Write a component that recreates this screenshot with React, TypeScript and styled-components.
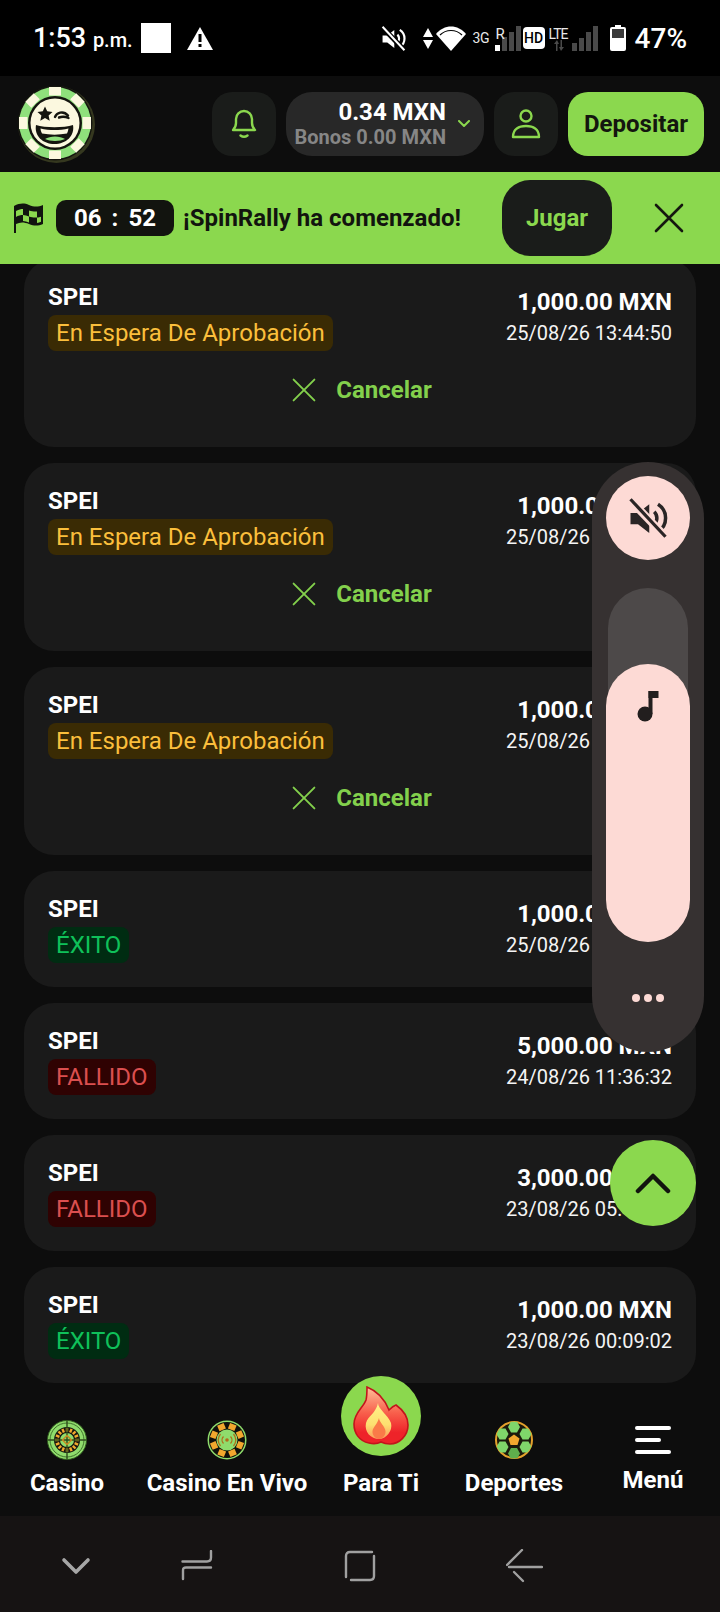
import { createGlobalStyle, styled } from "styled-components";

const GREEN = "#8bd84e";
const PINK = "#fddad5";

const GlobalStyle = createGlobalStyle`
  * {
    box-sizing: border-box;
  }
  html, body {
    margin: 0;
    padding: 0;
    background: #0d0d0d;
  }
  body {
    font-family: Roboto, "Liberation Sans", sans-serif;
  }
`;

type Status = "pending" | "success" | "failed";

const transactions: { amount: string; date: string; status: Status; canCancel?: boolean }[] = [
  { amount: "1,000.00 MXN", date: "25/08/26 13:44:50", status: "pending", canCancel: true },
  { amount: "1,000.00 MXN", date: "25/08/26 13:40:18", status: "pending", canCancel: true },
  { amount: "1,000.00 MXN", date: "25/08/26 13:38:02", status: "pending", canCancel: true },
  { amount: "1,000.00 MXN", date: "25/08/26 12:20:41", status: "success" },
  { amount: "5,000.00 MXN", date: "24/08/26 11:36:32", status: "failed" },
  { amount: "3,000.00 MXN", date: "23/08/26 05:12:27", status: "failed" },
  { amount: "1,000.00 MXN", date: "23/08/26 00:09:02", status: "success" },
];

const statusLabel: Record<Status, string> = {
  pending: "En Espera De Aprobación",
  success: "ÉXITO",
  failed: "FALLIDO",
};

const MuteIcon = ({ size, color, cut }: { size: number; color: string; cut: string }) => (
  <svg width={size} height={size} viewBox="0 0 32 32" fill="none">
    <path d="M2 12h6l9-7v23l-9-7H2z" fill={color} />
    <path d="M21 11a7 7 0 0 1 0 10M24 5a13 13 0 0 1 0 22" stroke={color} strokeWidth="2.8" />
    <path d="M3 3l27 28" stroke={cut} strokeWidth="6.500" />
    <path d="M2 1l28 30" stroke={color} strokeWidth="2.6" />
  </svg>
);

const CloseIcon = ({ size, color, width }: { size: number; color: string; width: number }) => (
  <svg width={size} height={size} viewBox="0 0 30 30" fill="none">
    <path d="M2 2l26 26M28 2L2 28" stroke={color} strokeWidth={width} strokeLinecap="round" />
  </svg>
);

const Logo = () => {
  const stripes = [0, 45, 90, 135, 180, 225, 270, 315];
  return (
    <svg width="80" height="80" viewBox="0 0 80 80">
      <circle cx="40.500" cy="40.500" r="38.500" fill="#35381f" />
      <circle cx="39" cy="39" r="37.500" fill="#14150f" />
      <circle cx="39" cy="39" r="36" fill="#8fe07c" />
      {stripes.map((a) => (
        <rect key={a} x="33" y="3" width="12" height="8.500" fill="#fbf8df" transform={`rotate(${a} 39 39)`} />
      ))}
      <circle cx="39" cy="39" r="27" fill="#14150f" />
      <circle cx="39" cy="39" r="24.500" fill="#fbf8df" />
      <path d="M29 22.500l2.200 4.800 5.300.6-3.900 3.600 1.100 5.200-4.700-2.700-4.700 2.700 1.100-5.200-3.900-3.600 5.300-.6z" fill="#14150f" />
      <path d="M39 33c1.500-4 8-7 13-1.500M43 33.500c3-1 6-1 9.500.5" stroke="#14150f" strokeWidth="2.400" fill="none" strokeLinecap="round" />
      <path d="M20 41c9 3 28 3 37 0 2 11-7 19-18.500 19S18 52 20 41z" fill="#14150f" />
      <path d="M24.500 44.500c9 2 19 2 28 0-.3 2-.8 3.500-1.500 5-8 1.500-17 1.500-25 0-.8-1.500-1.300-3-1.500-5z" fill="#fbf8df" />
      <path d="M29 55c5-3.500 15-3.500 20 0-5 2.500-15 2.500-20 0z" fill="#8fe07c" />
    </svg>
  );
};

const BellIcon = () => (
  <svg width="26" height="30" viewBox="0 0 26 30" fill="none" stroke={GREEN} strokeWidth="2.4" strokeLinecap="round" strokeLinejoin="round">
    <path d="M2 21c2-2 3-3 3-7V10a8 8 0 0 1 16 0v4c0 4 1 5 3 7z" />
    <path d="M9.500 26.500c2 1.500 5 1.500 7 0" />
  </svg>
);

const UserIcon = () => (
  <svg width="30" height="30" viewBox="0 0 30 30" fill="none" stroke={GREEN} strokeWidth="2.4" strokeLinejoin="round">
    <circle cx="15" cy="7" r="5.500" />
    <path d="M2 28c0-8 6-11 13-11s13 3 13 11z" />
  </svg>
);

const FlagIcon = () => (
  <svg width="32" height="32" viewBox="0 0 32 32">
    <path d="M2 31V4c6-3 10-3 15-1s9 2 14 0v19c-5 2-9 2-14 0-5-2-9-2-13 0v9z" fill="#12140f" />
    <path d="M4 9c3-1.500 5-2 7-2v6c-2 0-5 .5-7 2zM17 8.500c3 1 6 1.300 8 1v6c-3 .3-5 0-8-1zM11 13c2 0 4 .5 6 1.500v6c-2-1-4-1.500-6-1.500zM25 15.500c1.500 0 3-.3 4-.7v5c-1.200.7-2.700 1-4 1.200z" fill={GREEN} />
  </svg>
);

const RouletteIcon = () => {
  const ticks = Array.from({ length: 16 }, (_, i) => i * 22.5);
  return (
    <svg width="40" height="40" viewBox="0 0 40 40">
      <circle cx="20" cy="20" r="19.500" fill="#8fdc6c" stroke="#2f5a1e" strokeWidth="1" />
      <circle cx="20" cy="20" r="17" fill="none" stroke="#2f5a1e" strokeWidth=".8" />
      <circle cx="20" cy="20" r="13" fill="#15180f" />
      {ticks.map((a) => (
        <rect key={a} x="18.800" y="8" width="2.400" height="3.800" fill="#f2a82e" transform={`rotate(${a} 20 20)`} />
      ))}
      <circle cx="20" cy="20" r="7" fill="#8fdc6c" />
      <path d="M20 1v38M1 20h38" stroke="#2c4a1a" strokeWidth="1.400" />
      <path d="M20 15.500l4.500 4.500-4.500 4.500-4.500-4.500z" fill="none" stroke="#c98a22" strokeWidth="1.500" />
    </svg>
  );
};

const LiveChipIcon = () => {
  const spots = [0, 45, 90, 135, 180, 225, 270, 315];
  return (
    <svg width="40" height="40" viewBox="0 0 40 40">
      <circle cx="20" cy="20" r="19.500" fill="#8fdc6c" />
      <circle cx="20" cy="20" r="18" fill="#0f100b" />
      {spots.map((a) => (
        <rect key={a} x="16.500" y="3" width="7" height="6" fill="#f2a82e" transform={`rotate(${a + 22} 20 20)`} />
      ))}
      <circle cx="20" cy="20" r="10.500" fill="#8fdc6c" />
      <circle cx="20" cy="20" r="1.800" fill="#b06e1a" />
      <path d="M16.500 16.500a5 5 0 0 0 0 7M23.500 16.500a5 5 0 0 1 0 7M13.500 14a9 9 0 0 0 0 12M26.500 14a9 9 0 0 1 0 12" stroke="#b06e1a" strokeWidth="1.300" fill="none" />
    </svg>
  );
};

const hexCenters = [
  [20, 7],
  [8.500, 14],
  [31.500, 14],
  [8.500, 27],
  [31.500, 27],
  [20, 33.500],
];

const BallIcon = () => (
  <svg width="40" height="40" viewBox="0 0 40 40">
    <defs>
      <clipPath id="ballClip">
        <circle cx="20" cy="20" r="18.500" />
      </clipPath>
    </defs>
    <circle cx="20" cy="20" r="19" fill="#1b1a0c" />
    <circle cx="20" cy="20" r="18" fill="none" stroke="#e3a02c" strokeWidth="2" />
    <g clipPath="url(#ballClip)">
      {hexCenters.map(([x, y]) => (
        <path
          key={`${x}-${y}`}
          d={`M${x - 6} ${y}l3-5.400h6l3 5.400-3 5.400h-6z`}
          fill={y > 30 ? "#5fae4c" : "#7fd66a"}
        />
      ))}
    </g>
    <path d="M20 14.500l5.500 4-2 6.500h-7l-2-6.500z" fill="#f2a82e" />
  </svg>
);

const FlameIcon = () => (
  <svg width="56" height="60" viewBox="0 0 56 60">
    <defs>
      <linearGradient id="flameOuter" x1="0" y1="0" x2="0" y2="1">
        <stop offset="0" stopColor="#ffc09a" />
        <stop offset="0.45" stopColor="#f8604c" />
        <stop offset="0.8" stopColor="#ee2329" />
      </linearGradient>
      <linearGradient id="flameInner" x1="0" y1="0" x2="0" y2="1">
        <stop offset="0" stopColor="#fff28a" />
        <stop offset="0.6" stopColor="#fde070" />
        <stop offset="1" stopColor="#fb9a5a" />
      </linearGradient>
    </defs>
    <path d="M14 1C24 5 32 14 36 24c2-2 4-4 7-5 7 5 12 12 12 20 0 11-9 19-18 19-4 0-7-1-9-2-4 2-8 2-12 1C6 55 1 47 1 38c0-11 9-16 12-24 1-4 1-9 1-13z" fill="url(#flameOuter)" stroke="#c3141c" strokeWidth="1.600" />
    <path d="M25 17c0 6 10 12 13 20 2 8-5 16-12 16-8 0-15-7-13-16 2-7 10-10 12-20z" fill="url(#flameInner)" />
    <path d="M26 32c0 4 6 8 6.500 13 .5 4-3 8-6.500 8s-7-4-6.500-8c.5-4 5-7 6.500-13z" fill="#fa7a48" />
  </svg>
);

const MenuIcon = () => (
  <svg width="36" height="28" viewBox="0 0 36 28" fill="#fff">
    <rect x="0" y="0" width="36" height="4" rx="2" />
    <rect x="0" y="12" width="26" height="4" rx="2" />
    <rect x="0" y="24" width="36" height="4" rx="2" />
  </svg>
);

const App = () => {
  return (
    <Screen>
      <GlobalStyle />
      <StatusBar>
        <StatusLeft>
          <Time>
            1:53 <small>p.m.</small>
          </Time>
          <WhiteSquare />
          <WarnBox>
            <svg width="26" height="23" viewBox="0 0 26 23">
              <path d="M13 0l13 23H0z" fill="#fff" />
              <rect x="11.500" y="7" width="3" height="8" fill="#000" />
              <rect x="11.500" y="17" width="3" height="3" fill="#000" />
            </svg>
          </WarnBox>
        </StatusLeft>
        <StatusRight>
          <MuteIcon size={25} color="#fff" cut="#000" />
          <svg width="10" height="21" viewBox="0 0 10 21" fill="#fff" style={{ marginLeft: 17 }}>
            <path d="M5 0l5 9H0zM5 21L0 12h10z" />
          </svg>
          <svg width="30" height="25" viewBox="0 0 30 25" style={{ marginLeft: 3 }}>
            <path d="M15 25L0 8c8-10 22-10 30 0z" fill="#fff" />
            <path d="M4 9c6-6 16-6 22 0" stroke="#000" strokeWidth="1.200" fill="none" />
          </svg>
          <ThreeG>3G</ThreeG>
          <SignalBox $ml={6} $pl={0}>
            <SignalTag>R</SignalTag>
            <Bar $h={6} $on />
            <Bar $h={14} />
            <Bar $h={19} />
            <Bar $h={25} />
          </SignalBox>
          <HdBadge>HD</HdBadge>
          <SignalBox $ml={4} $pl={23}>
            <LteTag>LTE</LteTag>
            <LteArrows>
              <svg width="12" height="11" viewBox="0 0 12 11" fill="#4a4a4a">
                <path d="M3 11V4H1l3-4 2 4H4.500v7zM9 0v7h2l-3 4-2-4h1.500V0z" />
              </svg>
            </LteArrows>
            <Bar $h={8} />
            <Bar $h={13} />
            <Bar $h={19} />
            <Bar $h={25} />
          </SignalBox>
          <svg width="16" height="26" viewBox="0 0 16 26" fill="#fff" style={{ marginLeft: 12 }}>
            <path d="M5 0h6v2h3a2 2 0 0 1 2 2v20a2 2 0 0 1-2 2H2a2 2 0 0 1-2-2V4a2 2 0 0 1 2-2h3z" />
            <rect x="2" y="4" width="12" height="9" fill="#3a3a3a" />
          </svg>
          <Battery>47%</Battery>
        </StatusRight>
      </StatusBar>

      <Header>
        <LogoBox>
          <Logo />
        </LogoBox>
        <HeaderActions>
          <IconButton>
            <BellIcon />
          </IconButton>
          <BalancePill>
            <BalanceText>
              <BalanceMain>0.34 MXN</BalanceMain>
              <BalanceBonus>Bonos 0.00 MXN</BalanceBonus>
            </BalanceText>
            <svg width="12" height="8" viewBox="0 0 12 8" fill="none" stroke={GREEN} strokeWidth="2" strokeLinecap="round" strokeLinejoin="round">
              <path d="M1 1l5 5 5-5" />
            </svg>
          </BalancePill>
          <IconButton>
            <UserIcon />
          </IconButton>
          <DepositButton>Depositar</DepositButton>
        </HeaderActions>
      </Header>

      <Banner>
        <FlagIcon />
        <Timer>
          <span>06</span>
          <span>:</span>
          <span>52</span>
        </Timer>
        <BannerText>¡SpinRally ha comenzado!</BannerText>
        <PlayButton>Jugar</PlayButton>
        <BannerClose>
          <CloseIcon size={30} color="#15170f" width={2.6} />
        </BannerClose>
      </Banner>

      <List>
        {transactions.map((t, i) => (
          <Card key={i}>
            <CardTop>
              <div>
                <Method>SPEI</Method>
                <Badge $status={t.status}>{statusLabel[t.status]}</Badge>
              </div>
              <Amounts>
                <Amount>{t.amount}</Amount>
                <DateText>{t.date}</DateText>
              </Amounts>
            </CardTop>
            {t.canCancel && (
              <CancelRow>
                <CloseIcon size={24} color="#83d04c" width={2.4} />
                <span>Cancelar</span>
              </CancelRow>
            )}
          </Card>
        ))}
      </List>

      <BottomNav>
        <NavItem>
          <NavIcon>
            <RouletteIcon />
          </NavIcon>
          <NavLabel>Casino</NavLabel>
        </NavItem>
        <NavItem>
          <NavIcon>
            <LiveChipIcon />
          </NavIcon>
          <NavLabel>Casino En Vivo</NavLabel>
        </NavItem>
        <NavItem>
          <HotCircle>
            <FlameIcon />
          </HotCircle>
          <NavLabel>Para Ti</NavLabel>
        </NavItem>
        <NavItem>
          <NavIcon>
            <BallIcon />
          </NavIcon>
          <NavLabel>Deportes</NavLabel>
        </NavItem>
        <NavItem>
          <NavIcon>
            <MenuIcon />
          </NavIcon>
          <NavLabel $raised>Menú</NavLabel>
        </NavItem>
      </BottomNav>

      <SystemNav>
        <svg width="30" height="18" viewBox="0 0 30 18" fill="none" stroke="#a6a6a6" strokeWidth="3.600" strokeLinecap="round" strokeLinejoin="round">
          <path d="M3 3l12 12L27 3" />
        </svg>
        <svg width="32" height="32" viewBox="0 0 32 32" fill="none" stroke="#a0a0a0" strokeWidth="2.400" strokeLinecap="round">
          <path d="M1.500 11.500H26q4 0 4-4V1" />
          <path d="M30 17.500H5q-3 0-3 3V29" />
        </svg>
        <svg width="32" height="32" viewBox="0 0 32 32" fill="none" stroke="#a0a0a0" strokeWidth="2.400" strokeLinecap="round">
          <path d="M2 27V6q0-4 4-4h22" />
          <path d="M30 6v20q0 4-4 4H7" />
        </svg>
        <svg width="37" height="34" viewBox="0 0 37 34" fill="none" stroke="#a0a0a0" strokeWidth="2.400" strokeLinecap="round">
          <path d="M3 18h33" />
          <path d="M1 16L16 1" />
          <path d="M8 23l9 9" />
        </svg>
      </SystemNav>

      <VolumePanel>
        <MuteButton>
          <MuteIcon size={40} color="#2a2525" cut={PINK} />
        </MuteButton>
        <Track>
          <Thumb>
            <svg width="22" height="32" viewBox="0 0 22 32" fill="#221e1e">
              <circle cx="8" cy="24" r="7.500" />
              <rect x="11.500" y="1" width="4" height="23" />
              <rect x="11.500" y="1" width="10" height="7" />
            </svg>
          </Thumb>
        </Track>
        <Dots>
          <Dot />
          <Dot />
          <Dot />
        </Dots>
      </VolumePanel>

      <ScrollTop>
        <svg width="36" height="22" viewBox="0 0 36 22" fill="none" stroke="#12140f" strokeWidth="4.500" strokeLinecap="round" strokeLinejoin="round">
          <path d="M3 19L18 4l15 15" />
        </svg>
      </ScrollTop>
    </Screen>
  );
};

export default App;

const Screen = styled.div`
  position: relative;
  display: flex;
  flex-direction: column;
  width: 720px;
  height: 1612px;
  overflow: hidden;
  background: #0d0d0d;
  color: #fff;
`;

const StatusBar = styled.div`
  display: flex;
  flex: none;
  justify-content: space-between;
  align-items: center;
  height: 76px;
  padding: 0 33px;
  background: #000;
`;

const StatusLeft = styled.div`
  display: flex;
  align-items: center;
  gap: 8px;
`;

const Time = styled.div`
  font-size: 27px;
  font-weight: 500;
  white-space: nowrap;

  small {
    font-size: 20px;
    font-weight: 500;
  }
`;

const WhiteSquare = styled.div`
  width: 30px;
  height: 30px;
  background: #fff;
`;

const WarnBox = styled.div`
  display: flex;
  margin-left: 8px;
`;

const StatusRight = styled.div`
  display: flex;
  align-items: center;
`;

const ThreeG = styled.span`
  width: 16px;
  margin-left: 7px;
  font-size: 14px;
  letter-spacing: -0.5px;
  color: #e8e8e8;
`;

const SignalBox = styled.div<{ $ml: number; $pl: number }>`
  position: relative;
  display: flex;
  align-items: flex-end;
  gap: 2px;
  height: 25px;
  margin-left: ${(p) => p.$ml}px;
  padding-left: ${(p) => p.$pl}px;
`;

const Bar = styled.div<{ $h: number; $on?: boolean }>`
  width: 5px;
  height: ${(p) => p.$h}px;
  background: ${(p) => (p.$on ? "#fff" : "#4a4a4a")};
`;

const SignalTag = styled.span`
  position: absolute;
  left: 1px;
  top: 1px;
  font-size: 15px;
  line-height: 15px;
  color: #e8e8e8;
`;

const LteTag = styled.span`
  position: absolute;
  left: 0;
  top: 1px;
  font-size: 14px;
  line-height: 14px;
  letter-spacing: -1px;
  color: #e8e8e8;
`;

const LteArrows = styled.span`
  position: absolute;
  left: 4px;
  bottom: 0;
  display: flex;
`;

const HdBadge = styled.div`
  display: flex;
  align-items: center;
  justify-content: center;
  width: 22px;
  height: 22px;
  margin-left: 2px;
  border-radius: 4px;
  background: #fff;
  color: #000;
  font-size: 14px;
  font-weight: 500;
`;

const Battery = styled.span`
  margin-left: 9px;
  font-size: 28px;
  font-weight: 500;
`;

const Header = styled.div`
  display: flex;
  flex: none;
  justify-content: space-between;
  align-items: center;
  height: 96px;
  padding: 0 16px;
  background: #0d0d0d;
`;

const LogoBox = styled.div`
  display: flex;
`;

const HeaderActions = styled.div`
  display: flex;
  align-items: center;
  gap: 10px;
`;

const IconButton = styled.div`
  display: flex;
  align-items: center;
  justify-content: center;
  width: 64px;
  height: 64px;
  border-radius: 20px;
  background: #1a1c1a;
`;

const BalancePill = styled.div`
  display: flex;
  align-items: center;
  justify-content: flex-end;
  gap: 12px;
  width: 198px;
  height: 64px;
  padding-right: 14px;
  border-radius: 26px;
  background: #282828;
`;

const BalanceText = styled.div`
  display: flex;
  flex-direction: column;
  align-items: flex-end;
`;

const BalanceMain = styled.div`
  font-size: 24px;
  line-height: 27px;
  font-weight: 700;
`;

const BalanceBonus = styled.div`
  font-size: 20px;
  line-height: 23px;
  font-weight: 700;
  color: #868686;
  white-space: nowrap;
`;

const DepositButton = styled.div`
  display: flex;
  align-items: center;
  justify-content: center;
  width: 136px;
  height: 64px;
  border-radius: 20px;
  background: ${GREEN};
  color: #14160f;
  font-size: 24px;
  font-weight: 700;
`;

const Banner = styled.div`
  position: relative;
  z-index: 1;
  display: flex;
  flex: none;
  align-items: center;
  height: 92px;
  padding: 0 36px 0 12px;
  background: ${GREEN};
`;

const Timer = styled.div`
  display: flex;
  align-items: center;
  justify-content: center;
  gap: 10px;
  width: 118px;
  height: 36px;
  margin-left: 12px;
  border-radius: 10px;
  background: #12140f;
  color: #fff;
  font-size: 24px;
  font-weight: 700;
`;

const BannerText = styled.div`
  flex: 1;
  margin-left: 9px;
  color: #12140f;
  font-size: 24px;
  font-weight: 700;
  white-space: nowrap;
`;

const PlayButton = styled.div`
  display: flex;
  align-items: center;
  justify-content: center;
  width: 110px;
  height: 76px;
  border-radius: 28px;
  background: #1a1c1a;
  color: ${GREEN};
  font-size: 24px;
  font-weight: 700;
`;

const BannerClose = styled.div`
  display: flex;
  margin-left: 42px;
`;

const List = styled.div`
  display: flex;
  flex: 1;
  flex-direction: column;
  gap: 16px;
  min-height: 0;
  margin-top: -5px;
  padding: 0 24px;
  overflow: hidden;
`;

const Card = styled.div`
  flex: none;
  padding: 25px 24px 0;
  border-radius: 30px;
  background: #1a1a1a;
`;

const CardTop = styled.div`
  display: flex;
  justify-content: space-between;
  align-items: flex-start;
  padding-bottom: 24px;
`;

const Method = styled.div`
  font-size: 24px;
  line-height: 26px;
  font-weight: 700;
  margin-bottom: 5px;
`;

const badgeColors: Record<Status, { fg: string; bg: string }> = {
  pending: { fg: "#fbbf3c", bg: "#3a2b04" },
  success: { fg: "#0fc15a", bg: "#002c12" },
  failed: { fg: "#db4f4f", bg: "#2f0202" },
};

const Badge = styled.div<{ $status: Status }>`
  display: inline-block;
  height: 36px;
  padding: 0 8px;
  border-radius: 8px;
  background: ${(p) => badgeColors[p.$status].bg};
  color: ${(p) => badgeColors[p.$status].fg};
  font-size: 24px;
  line-height: 36px;
`;

const Amounts = styled.div`
  display: flex;
  flex-direction: column;
  align-items: flex-end;
  gap: 5px;
  padding-top: 5px;
`;

const Amount = styled.div`
  font-size: 24px;
  line-height: 26px;
  font-weight: 700;
`;

const DateText = styled.div`
  font-size: 20px;
  line-height: 26px;
  color: #f4f4f4;
`;

const CancelRow = styled.div`
  display: flex;
  align-items: center;
  justify-content: center;
  gap: 20px;
  height: 48px;
  margin-top: -9px;
  margin-bottom: 33px;
  padding-left: 4px;
  color: #83d04c;
  font-size: 24px;
  font-weight: 700;
`;

const BottomNav = styled.div`
  position: relative;
  z-index: 1;
  display: grid;
  flex: none;
  grid-template-columns: 134px 186px 122px 144px 134px;
  height: 120px;
  background: #0d0d0d;
`;

const NavItem = styled.div`
  display: flex;
  flex-direction: column;
  align-items: center;
  padding-top: 24px;
`;

const NavIcon = styled.div`
  display: flex;
  align-items: center;
  justify-content: center;
  height: 40px;
  margin-bottom: 9px;
`;

const HotCircle = styled.div`
  display: flex;
  align-items: center;
  justify-content: center;
  width: 80px;
  height: 80px;
  margin-top: -44px;
  margin-bottom: 13px;
  border-radius: 50%;
  background: ${GREEN};
`;

const NavLabel = styled.div<{ $raised?: boolean }>`
  font-size: 24px;
  line-height: 28px;
  font-weight: 700;
  white-space: nowrap;
  margin-top: ${(p) => (p.$raised ? "-3px" : "0")};
`;

const SystemNav = styled.div`
  display: grid;
  flex: none;
  grid-template-columns: 120px 163px 162px 37px;
  align-items: center;
  height: 96px;
  padding: 4px 0 0 61px;
  background: #161313;
`;

const VolumePanel = styled.div`
  position: absolute;
  z-index: 2;
  top: 462px;
  left: 592px;
  display: flex;
  flex-direction: column;
  align-items: center;
  width: 112px;
  height: 590px;
  padding-top: 14px;
  border-radius: 56px;
  background: #363131;
`;

const MuteButton = styled.div`
  display: flex;
  flex: none;
  align-items: center;
  justify-content: center;
  width: 84px;
  height: 84px;
  border-radius: 50%;
  background: ${PINK};
`;

const Track = styled.div`
  display: flex;
  flex: none;
  flex-direction: column;
  align-items: center;
  justify-content: flex-end;
  width: 80px;
  height: 354px;
  margin-top: 28px;
  border-radius: 40px;
  background: #4d4949;
`;

const Thumb = styled.div`
  display: flex;
  flex: none;
  justify-content: center;
  width: 84px;
  height: 278px;
  padding-top: 26px;
  border-radius: 42px;
  background: ${PINK};
`;

const Dots = styled.div`
  display: flex;
  gap: 4px;
  margin-top: 52px;
`;

const Dot = styled.div`
  width: 8px;
  height: 8px;
  border-radius: 50%;
  background: ${PINK};
`;

const ScrollTop = styled.div`
  position: absolute;
  z-index: 2;
  top: 1140px;
  left: 610px;
  display: flex;
  align-items: center;
  justify-content: center;
  width: 86px;
  height: 86px;
  border-radius: 50%;
  background: ${GREEN};
`;
